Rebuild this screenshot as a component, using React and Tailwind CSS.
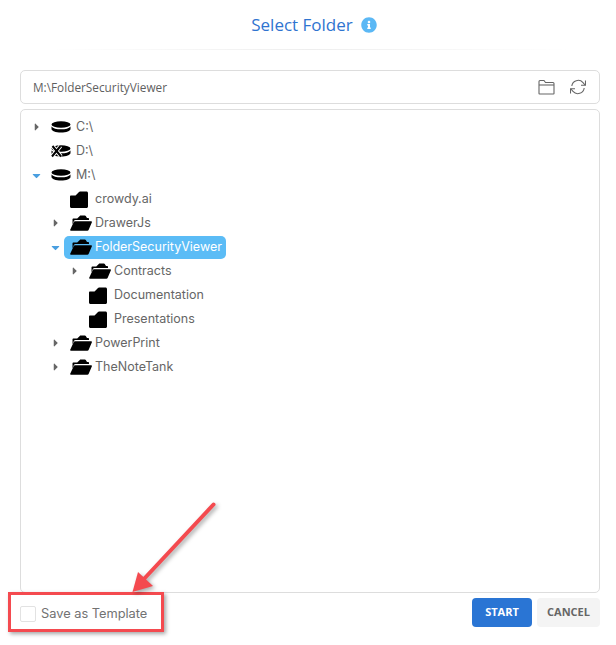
import React from "react";
import { FaInfoCircle, FaCaretRight, FaCaretDown } from "react-icons/fa";

const tree = [
  { name: "C:\\", type: "drive", caret: "right" },
  { name: "D:\\", type: "drive-off" },
  {
    name: "M:\\",
    type: "drive",
    caret: "down",
    children: [
      { name: "crowdy.ai", type: "closed" },
      { name: "DrawerJs", type: "open", caret: "right" },
      {
        name: "FolderSecurityViewer",
        type: "open",
        caret: "down",
        selected: true,
        children: [
          { name: "Contracts", type: "open", caret: "right" },
          { name: "Documentation", type: "closed" },
          { name: "Presentations", type: "closed" },
        ],
      },
      { name: "PowerPrint", type: "open", caret: "right" },
      { name: "TheNoteTank", type: "open", caret: "right" },
    ],
  },
];

const DriveIcon = ({ off }) => (
  <svg width="20" height="14" viewBox="0 0 20 14" className="shrink-0">
    <ellipse cx="10" cy="4.5" rx="9.5" ry="3.2" fill="#000" />
    <path d="M.5 6.500v2.600C.5 11 4.700 12.600 10 12.600s9.500-1.600 9.500-3.500V6.500C18 8.600 14.500 9.300 10 9.300S2 8.600.5 6.500z" fill="#000" />
    {off && <path d="M1.500 2 10 12.500M9.500 2 1 12.500" stroke="#fff" strokeWidth="4" />}
    {off && <path d="M1.500 2 10 12.500M9.500 2 1 12.500" stroke="#000" strokeWidth="2" />}
  </svg>
);

const FolderClosed = () => (
  <svg width="18" height="17" viewBox="0 0 18 17" className="shrink-0">
    <path d="M0 5.500C0 5 .4 4.500 1 4.500h4.500L9 1c.3-.3.600-.5 1-.5h6.500c.8 0 1.500.7 1.500 1.500v13.500c0 .8-.7 1.500-1.500 1.500h-15C.7 17 0 16.300 0 15.500z" fill="#000" />
  </svg>
);

const FolderOpen = () => (
  <svg width="22" height="16" viewBox="0 0 22 16" className="shrink-0">
    <path d="M2.500 9.500V4.500c0-.6.500-1 1-1h3.700L9.800 1c.2-.3.500-.4.800-.4h4.300c.4 0 .7.200.9.500l1.200 1.900h1c.6 0 1 .4 1 1v1H5.500c-.8 0-1.300.4-1.600 1z" fill="#000" />
    <path d="M5 6.200h16.200c.6 0 .9.500.7 1L18.600 15c-.2.500-.7.800-1.200.8H.9c-.6 0-.9-.5-.7-1L3.800 7c.2-.5.700-.8 1.200-.8z" fill="#000" />
  </svg>
);

const TreeRow = ({ node, level }) => (
  <>
    <div className="flex h-6 items-center" style={{ paddingLeft: level * 19 }}>
      <span className="flex w-[17px] shrink-0 justify-center">
        {node.caret === "right" && <FaCaretRight className="text-[12px] text-[#666666]" />}
        {node.caret === "down" && <FaCaretDown className="text-[13px] text-[#4a9fe0]" />}
      </span>
      <div className={`flex h-[23px] items-center rounded-[5px] pl-[6px] pr-1 ${node.selected ? "bg-[#5bbcf6] text-white" : "text-[#666666]"}`}>
        <span className="flex w-[25px] shrink-0 items-center">
          {node.type === "drive" && <DriveIcon />}
          {node.type === "drive-off" && <DriveIcon off />}
          {node.type === "closed" && <FolderClosed />}
          {node.type === "open" && <FolderOpen />}
        </span>
        <span className="whitespace-nowrap">{node.name}</span>
      </div>
    </div>
    {node.children && node.children.map((child) => <TreeRow key={child.name} node={child} level={level + 1} />)}
  </>
);

export default function App() {
  return (
    <div className="relative flex h-[645px] w-[616px] flex-col overflow-hidden bg-white pl-5 pr-4 font-['Open_Sans',sans-serif]">
      <div className="flex h-[49px] items-center justify-center gap-2 pl-2">
        <h1 className="text-[17px] text-[#2f74d0]">Select Folder</h1>
        <FaInfoCircle className="text-[16px] text-[#5bb8f5]" />
      </div>
      <div className="mx-[30px] h-px bg-gradient-to-r from-transparent via-[#eeeeee] to-transparent" />

      <div className="mt-5 flex h-[34px] items-center justify-between rounded-[5px] border border-[#dddddd] pl-3 pr-[13px] text-[11.800px] text-[#5f5f5f]">
        <span className="pt-px">M:\FolderSecurityViewer</span>
        <div className="flex items-center gap-[15px] text-[#666666]">
          <svg width="17" height="16" viewBox="0 0 17 16" fill="none" stroke="#666" strokeWidth="1.100">
            <path d="M1 14.500V2.500c0-.6.400-1 1-1h4l1.500 2H15c.6 0 1 .4 1 1v10c0 .3-.2.500-.5.500h-14c-.3 0-.5-.2-.5-.5z" />
            <path d="M1 6h15" />
          </svg>
          <svg width="16" height="16" viewBox="0 0 16 16" fill="none" stroke="#666" strokeWidth="1.100">
            <path d="M1.800 7A6.400 6.400 0 0 1 13 3.600L15 6" />
            <path d="M15.500 1.500V6.200H11" />
            <path d="M14.200 9A6.400 6.400 0 0 1 3 12.400L1 10" />
            <path d="M.5 14.500V9.800H5" />
          </svg>
        </div>
      </div>

      <div className="mt-[5px] h-[484px] rounded-[5px] border border-[#dddddd] pl-[7px] pt-[5px] font-['Inter',sans-serif] text-[12.500px]">
        {tree.map((node) => (
          <TreeRow key={node.name} node={node} level={0} />
        ))}
      </div>

      <div className="mt-[5px] flex items-start justify-between">
        <label className="flex h-[30px] items-center gap-[5px] pt-[1px] font-['Inter',sans-serif] text-[12.800px] text-[#727272]">
          <span className="h-4 w-4 rounded-[2px] border border-[#e2e2e2]" />
          Save as Template
        </label>
        <div className="flex gap-[5px] font-['Open_Sans',sans-serif] text-[11px] font-bold">
          <button className="h-[29px] w-[60px] rounded bg-[#2a75d4] text-white">START</button>
          <button className="h-[29px] w-[63px] rounded bg-[#f4f4f4] text-[#666666]">CANCEL</button>
        </div>
      </div>

      {/* annotation on top of the screenshot */}
      <div className="absolute left-[8px] top-[592px] h-[40px] w-[156px] border-[3px] border-[#f44a4f] shadow-[2px_2px_4px_rgba(0,0,0,0.35)]" />
      <svg className="absolute left-[120px] top-[495px] drop-shadow-[2px_2px_2px_rgba(0,0,0,0.35)]" width="105" height="105" viewBox="0 0 105 105" fill="none">
        <path d="M93.500 9.500 23 85" stroke="#f44a4f" strokeWidth="4" strokeLinecap="round" />
        <path d="M12.500 97 18 77 33 91z" fill="#f44a4f" />
      </svg>
    </div>
  );
}
